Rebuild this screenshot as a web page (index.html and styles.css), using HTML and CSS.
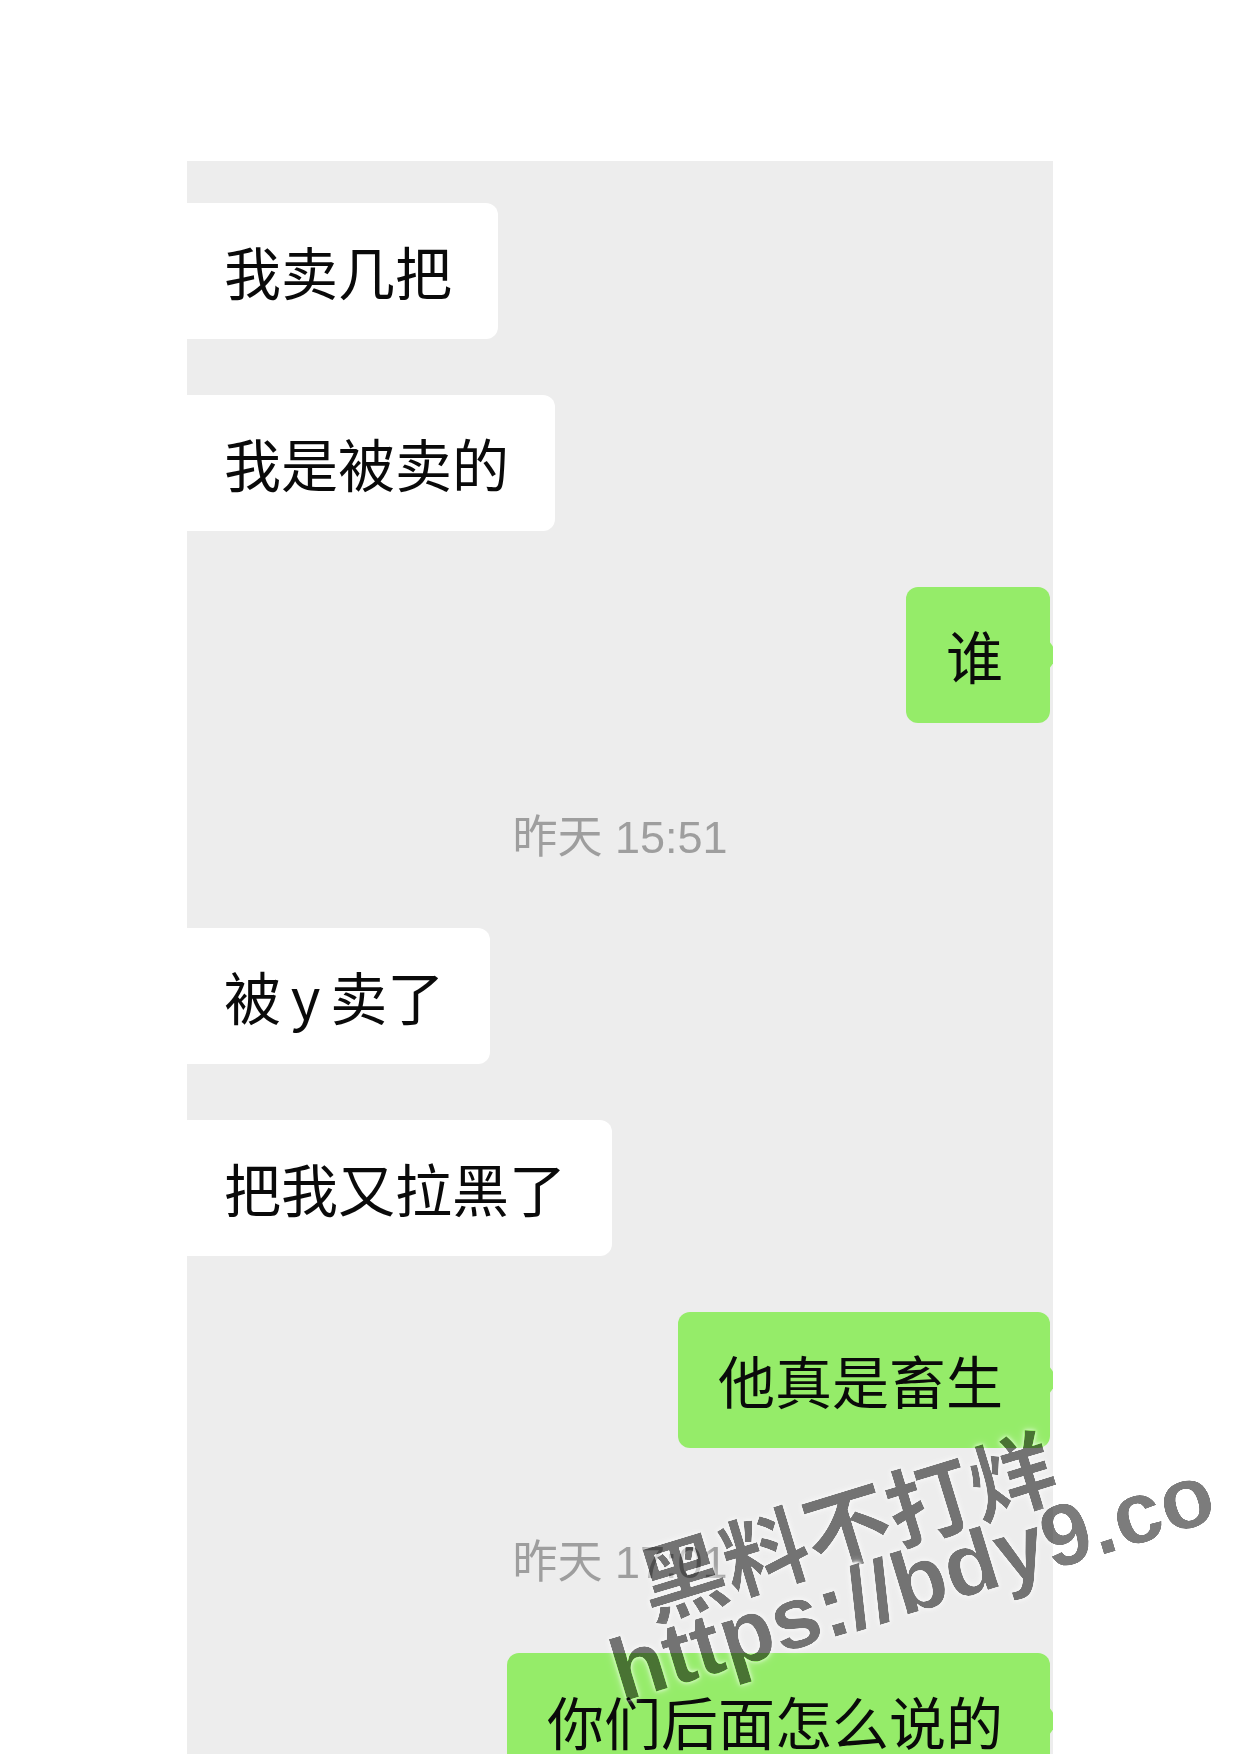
FILE: index.html
```html
<!DOCTYPE html>
<html lang="zh-CN">
<head>
    <meta charset="UTF-8">
    <meta name="viewport" content="width=device-width, initial-scale=1.0">
    <title>聊天记录</title>
    <link rel="stylesheet" href="styles.css">
</head>
<body>
    <div class="chat">
        <div class="row left"><div class="bubble">我卖几把</div></div>
        <div class="row left"><div class="bubble">我是被卖的</div></div>
        <div class="row right"><div class="bubble green">谁</div></div>
        <div class="time">昨天 15:51</div>
        <div class="row left"><div class="bubble tight">被 y 卖了</div></div>
        <div class="row left"><div class="bubble">把我又拉黑了</div></div>
        <div class="row right"><div class="bubble green">他真是畜生</div></div>
        <div class="time">昨天 17:01</div>
        <div class="row right"><div class="bubble green">你们后面怎么说的</div></div>
    </div>

    <!-- watermark over the screenshot -->
    <div class="watermark">
        <div class="wm-cn">黑料不打烊</div>
        <div class="wm-url">https://bdy9.co</div>
    </div>
</body>
</html>
```
FILE: styles.css
```css
body {
    margin: 0;
    background-color: #fff;
    font-family: "Noto Sans CJK SC", sans-serif;
    overflow: hidden;
}
.chat {
    margin-top: 161px;
    margin-left: 187px;
    width: 866px;
    height: 1593px;
    padding-top: 42px;
    box-sizing: border-box;
    background-color: #ededed;
    overflow: hidden;
    display: flex;
    flex-direction: column;
}
.row {
    display: flex;
    flex-shrink: 0;
    margin-top: 56px;
}
.row:first-child {
    margin-top: 0;
}
.row.right {
    justify-content: flex-end;
}
.bubble {
    position: relative;
    height: 136px;
    line-height: 134px;
    padding: 0 46px 0 37px;
    font-size: 57px;
    color: #0a0a0a;
    background-color: #fff;
    border-radius: 0 12px 12px 0;
    white-space: nowrap;
}
.bubble.tight {
    word-spacing: -3px;
}
.bubble.green {
    background-color: #95ec69;
    padding: 0 47px 0 40px;
    margin-right: 3px;
    border-radius: 12px;
}
/* little tail, mostly cut off by the panel edge */
.bubble.green::after {
    content: "";
    position: absolute;
    right: -9px;
    top: 50%;
    margin-top: -14px;
    border-top: 14px solid transparent;
    border-bottom: 14px solid transparent;
    border-left: 10px solid #95ec69;
}
.time {
    flex-shrink: 0;
    margin-top: 85px;
    height: 60px;
    line-height: 60px;
    text-align: center;
    font-family: "Liberation Sans", "Noto Sans CJK SC", sans-serif;
    font-size: 45px;
    color: #9e9e9e;
}
.time + .row {
    margin-top: 60px;
}
.watermark {
    position: absolute;
    left: 575px;
    top: 1550px;
    transform-origin: 0 0;
    transform: rotate(-17deg);
    color: #3e3e3e;
    font-weight: 700;
    font-size: 88px;
    line-height: 86px;
    white-space: nowrap;
    mix-blend-mode: hard-light;
    text-shadow: 0 0 4px rgba(255, 255, 255, 0.8), 0 0 9px rgba(255, 255, 255, 0.5);
}
.wm-cn {
    margin: 10px 0 -10px 52px;
    font-family: "Noto Sans CJK SC", sans-serif;
    font-size: 86px;
}
.wm-url {
    font-family: "Liberation Sans", Arial, sans-serif;
}
```
